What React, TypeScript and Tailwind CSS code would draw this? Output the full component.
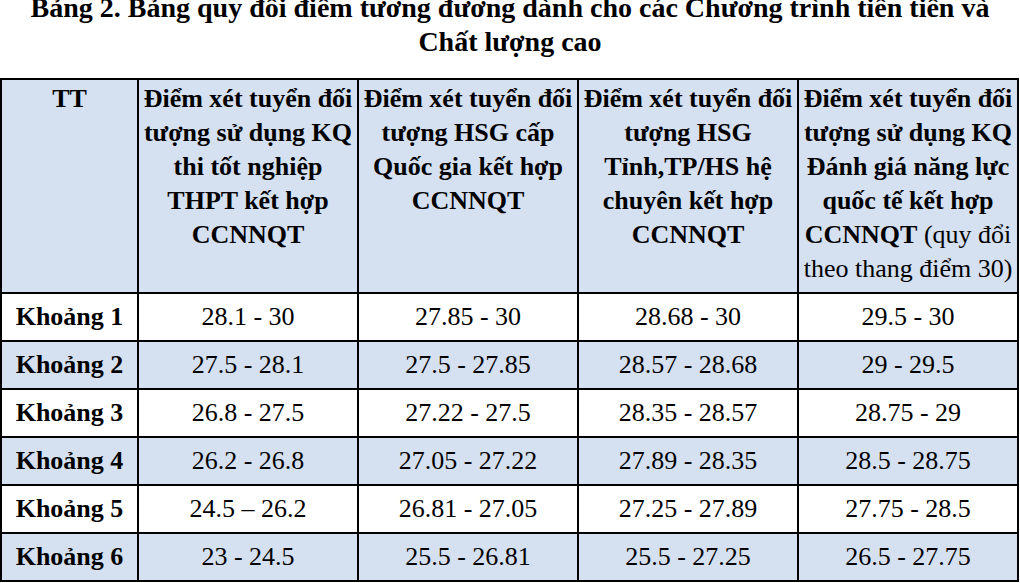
const HEADERS = [
  "Điểm xét tuyển đối tượng sử dụng KQ thi tốt nghiệp THPT kết hợp CCNNQT",
  "Điểm xét tuyển đối tượng HSG cấp Quốc gia kết hợp CCNNQT",
  "Điểm xét tuyển đối tượng HSG Tỉnh,TP/HS hệ chuyên kết hợp CCNNQT",
];

const ROWS: { label: string; values: string[] }[] = [
  { label: "Khoảng 1", values: ["28.1 - 30", "27.85 - 30", "28.68 - 30", "29.5 - 30"] },
  { label: "Khoảng 2", values: ["27.5 - 28.1", "27.5 - 27.85", "28.57 - 28.68", "29 - 29.5"] },
  { label: "Khoảng 3", values: ["26.8 - 27.5", "27.22 - 27.5", "28.35 - 28.57", "28.75 - 29"] },
  { label: "Khoảng 4", values: ["26.2 - 26.8", "27.05 - 27.22", "27.89 - 28.35", "28.5 - 28.75"] },
  { label: "Khoảng 5", values: ["24.5 – 26.2", "26.81 - 27.05", "27.25 - 27.89", "27.75 - 28.5"] },
  { label: "Khoảng 6", values: ["23 - 24.5", "25.5 - 26.81", "25.5 - 27.25", "26.5 - 27.75"] },
];

export default function App() {
  return (
    <div className="w-[1020px] h-[583px] overflow-hidden bg-white text-black font-['Liberation_Serif']">
      {/* title, top line is cropped in the screenshot */}
      <h1 className="-mt-[9px] text-center text-[28px] leading-[34px] font-bold">
        Bảng 2. Bảng quy đổi điểm tương đương dành cho các Chương trình tiên tiến và
        <br />
        Chất lượng cao
      </h1>

      <table className="mt-[19px] w-[1017px] table-fixed border-collapse border-2 border-black text-[26px] leading-[34px]">
        <colgroup>
          <col className="w-[137px]" />
          <col className="w-[220px]" />
          <col className="w-[220px]" />
          <col className="w-[220px]" />
          <col className="w-[220px]" />
        </colgroup>
        <thead>
          <tr className="h-[214px] bg-[#d5e1f1]">
            <th className="border-2 border-black align-top pt-[2px] font-bold">TT</th>
            {HEADERS.map((h) => (
              <th key={h} className="border-2 border-black align-top pt-[2px] px-0 font-bold">
                {h}
              </th>
            ))}
            <th className="border-2 border-black align-top pt-[2px] px-0 font-normal">
              <span className="font-bold">
                Điểm xét tuyển đối tượng sử dụng KQ Đánh giá năng lực quốc tế kết hợp CCNNQT
              </span>{" "}
              (quy đổi theo thang điểm 30)
            </th>
          </tr>
        </thead>
        <tbody>
          {ROWS.map((row, i) => (
            <tr key={row.label} className={i % 2 === 1 ? "h-[48px] bg-[#d5e1f1]" : "h-[48px] bg-white"}>
              <td className="border-2 border-black text-center font-bold">{row.label}</td>
              {row.values.map((v, j) => (
                <td key={j} className="border-2 border-black text-center">
                  {v}
                </td>
              ))}
            </tr>
          ))}
        </tbody>
      </table>
    </div>
  );
}
